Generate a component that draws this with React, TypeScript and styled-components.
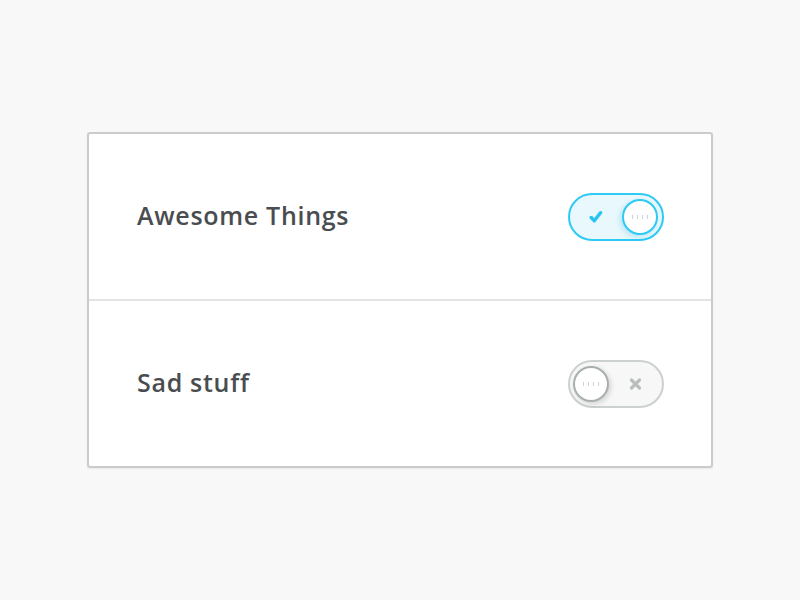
import React, { useState } from 'react'
import styled, { createGlobalStyle } from 'styled-components'

const GlobalStyle = createGlobalStyle`
  html, body {
    margin: 0;
    padding: 0;
    background: #f8f8f8;
  }
`

const Page = styled.div`
  width: 800px;
  height: 600px;
  display: flex;
  align-items: center;
  justify-content: center;
  font-family: "Open Sans", Lato, sans-serif;
`

const Card = styled.div`
  width: 622px;
  background: #fff;
  border: 2px solid #c9cbcd;
  border-radius: 3px;
  box-shadow: 0 1px 2px rgba(0, 0, 0, 0.06);
`

const Row = styled.div`
  height: 165px;
  display: flex;
  align-items: center;
  justify-content: space-between;
  padding: 0 47px 0 48px;
  & + & {
    border-top: 2px solid #e1e3e4;
  }
`

const Label = styled.div`
  font-size: 25px;
  font-weight: 600;
  letter-spacing: 0.7px;
  color: #4a4d50;
  margin-top: -3px;
`

const Track = styled.button<{ $on: boolean }>`
  width: 96px;
  height: 48px;
  box-sizing: border-box;
  padding: 0;
  border-radius: 24px;
  border: 2px solid ${p => (p.$on ? '#2ccaf5' : '#cdd0d1')};
  background: ${p => (p.$on ? '#e9f8fd' : '#f7f7f7')};
  display: flex;
  align-items: center;
  position: relative;
  cursor: pointer;
  outline: none;
`

const Mark = styled.span<{ $on: boolean }>`
  position: absolute;
  top: 50%;
  ${p => (p.$on ? 'left: 19px;' : 'right: 20px;')}
  transform: translateY(-50%);
  display: flex;
`

const Knob = styled.span<{ $on: boolean }>`
  position: absolute;
  top: 4px;
  left: ${p => (p.$on ? '52px' : '3px')};
  width: 36px;
  height: 36px;
  box-sizing: border-box;
  border-radius: 50%;
  background: #fff;
  border: 2px solid ${p => (p.$on ? '#2ccaf5' : '#a9afaf')};
  box-shadow: ${p =>
    p.$on ? '-2px 2px 5px rgba(40, 170, 220, 0.25)' : '2px 2px 5px rgba(0, 0, 0, 0.14)'};
  display: flex;
  align-items: center;
  justify-content: center;
  gap: 4px;
`

const Tick = styled.i`
  width: 1px;
  height: 4px;
  background: #cfd2d3;
`

const Check = () => (
  <svg width="14" height="13" viewBox="0 0 14 13">
    <path d="M2.2 7 L5.3 10.2 L11.5 2.2" fill="none" stroke="#29c3f3" strokeWidth="3.4" strokeLinecap="round" strokeLinejoin="round" />
  </svg>
)

const Cross = () => (
  <svg width="13" height="13" viewBox="0 0 13 13">
    <path d="M2.5 2.5 L10.5 10.5 M10.5 2.5 L2.5 10.5" fill="none" stroke="#b9bdbe" strokeWidth="3.2" strokeLinecap="round" />
  </svg>
)

const Toggle = ({ initial }: { initial: boolean }) => {
  const [on, setOn] = useState(initial)
  return (
    <Track $on={on} onClick={() => setOn(!on)}>
      <Mark $on={on}>{on ? <Check /> : <Cross />}</Mark>
      <Knob $on={on}>
        <Tick />
        <Tick />
        <Tick />
        <Tick />
      </Knob>
    </Track>
  )
}

const App = () => {
  return (
    <Page>
      <GlobalStyle />
      <Card>
        <Row>
          <Label>Awesome Things</Label>
          <Toggle initial={true} />
        </Row>
        <Row>
          <Label>Sad stuff</Label>
          <Toggle initial={false} />
        </Row>
      </Card>
    </Page>
  )
}

export default App
